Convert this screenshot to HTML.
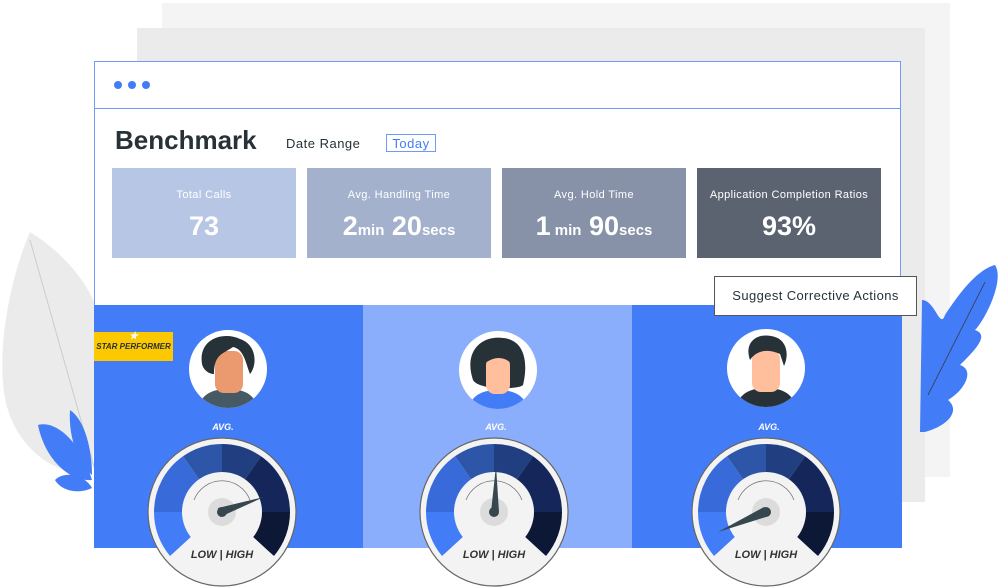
<!DOCTYPE html>
<html><head><meta charset="utf-8"><style>
body{margin:0;width:1000px;height:588px;position:relative;overflow:hidden;background:#fff;font-family:"Liberation Sans",sans-serif}
.a{position:absolute}
.card{position:absolute;top:168px;width:184px;height:90px;color:#fff;text-align:center}
.card .t{font-size:11px;margin-top:21px;letter-spacing:.4px}
.card .v{font-size:27px;font-weight:bold;margin-top:10px}
.card .v small{font-size:15px}
.lbl{position:absolute;font-size:9px;font-weight:bold;font-style:italic;color:#fff;width:60px;text-align:center}
.lh{position:absolute;font-size:11px;font-weight:bold;font-style:italic;color:#333;width:80px;text-align:center;top:549px}
</style></head><body>
<div class="a" style="left:162px;top:3px;width:788px;height:474px;background:#f4f4f4"></div>
<div class="a" style="left:137px;top:28px;width:788px;height:474px;background:#ebebeb"></div>
<svg class="a" style="left:0;top:0" width="1000" height="588">
<path d="M30 232 C60 250 100 290 100 330 C100 380 95 430 92 470 C60 480 20 450 8 410 C-5 370 5 290 30 232Z" fill="#ebebeb"/>
<path d="M30 240 L95 470" stroke="#ccc" fill="none"/>
<path d="M38 425 C55 420 80 440 92 480 C70 482 45 460 38 425Z" fill="#437cf7"/>
<path d="M55 480 C65 470 85 475 92 488 C80 494 62 492 55 480Z" fill="#437cf7"/>
<path d="M70 410 C85 420 92 450 92 475 C80 465 68 440 70 410Z" fill="#437cf7"/>
<path d="M995 265 C1005 280 985 320 975 330 C990 335 975 350 960 365 C975 370 965 390 948 400 C960 410 950 425 925 432 L920 432 L922 300 C935 300 940 330 945 315 C955 300 975 270 995 265Z" fill="#437cf7"/>
<path d="M985 282 L928 395" stroke="#333" stroke-width=".7"/>
</svg>
<div class="a" style="left:94px;top:61px;width:807px;height:244px;background:#fff;border:1px solid #6f9af5;border-bottom:none;box-sizing:border-box"></div>
<div class="a" style="left:95px;top:108px;width:806px;height:1px;background:#6f9af5"></div>
<div class="a" style="left:114px;top:81px;width:8px;height:8px;border-radius:50%;background:#437cf7"></div>
<div class="a" style="left:128px;top:81px;width:8px;height:8px;border-radius:50%;background:#437cf7"></div>
<div class="a" style="left:142px;top:81px;width:8px;height:8px;border-radius:50%;background:#437cf7"></div>
<div class="a" style="left:115px;top:125px;font-size:26px;font-weight:bold;color:#263238">Benchmark</div>
<div class="a" style="left:286px;top:136px;font-size:13px;color:#263238;letter-spacing:.5px">Date Range</div>
<div class="a" style="left:386px;top:134px;width:50px;height:18px;border:1px solid #6f9af5;box-sizing:border-box;font-size:13px;color:#437cf7;text-align:center;line-height:17px;letter-spacing:.5px">Today</div>
<div class="card" style="left:112px;background:#b8c6e5"><div class="t">Total Calls</div><div class="v">73</div></div>
<div class="card" style="left:307px;background:#a3b1cc"><div class="t">Avg. Handling Time</div><div class="v">2<small>min</small> 20<small>secs</small></div></div>
<div class="card" style="left:502px;background:#8792a8"><div class="t">Avg. Hold Time</div><div class="v">1<small> min</small> 90<small>secs</small></div></div>
<div class="card" style="left:697px;background:#5c6370"><div class="t">Application Completion Ratios</div><div class="v">93%</div></div>
<div class="a" style="left:94px;top:305px;width:269px;height:243px;background:#437cf7"></div>
<div class="a" style="left:363px;top:305px;width:269px;height:243px;background:#8aaefb"></div>
<div class="a" style="left:632px;top:305px;width:270px;height:243px;background:#437cf7"></div>
<div class="a" style="left:714px;top:276px;width:203px;height:40px;background:#fff;border:1px solid #555;box-sizing:border-box;font-size:13px;color:#263238;line-height:38px;text-align:center;letter-spacing:.4px">Suggest Corrective Actions</div>
<div class="a" style="left:94px;top:332px;width:79px;height:29px;background:#fcc800;text-align:center;font-size:8px;font-weight:bold;font-style:italic;color:#263238;line-height:10px"><span style="color:#fff;font-size:10px">★</span><br>STAR PERFORMER</div>
<svg class="a" style="left:0;top:0" width="1000" height="588">
<defs>
<clipPath id="cc"><circle r="39"/></clipPath>
<clipPath id="oc"><circle r="72"/></clipPath>
<g id="gauge">
<circle r="74" fill="#f3f3f3" stroke="#666" stroke-width="1.2"/>
<path d="M0 0L-52 44A68 68 0 0 1 -68 0Z" fill="#437cf7"/>
<path d="M0 0L-68 0A68 68 0 0 1 -39 -55.7Z" fill="#386bd9"/>
<path d="M0 0L-39 -55.7A68 68 0 0 1 0 -68Z" fill="#2d55a8"/>
<path d="M0 0L0 -68A68 68 0 0 1 39 -55.7Z" fill="#213f80"/>
<path d="M0 0L39 -55.7A68 68 0 0 1 68 0Z" fill="#14265a"/>
<path d="M0 0L68 0A68 68 0 0 1 52 44Z" fill="#0c1836"/>
<circle r="40" fill="#f3f3f3"/>
<path d="M-54 46L-28 22L28 22L54 46L0 90Z" fill="#f3f3f3" clip-path="url(#oc)"/>
<path d="M-28 -12A30 30 0 0 1 28 -12" fill="none" stroke="#777" stroke-width=".8"/>
<circle r="14" fill="#dcdcdc"/>
</g>
<g id="av1">
<circle r="39" fill="#fff"/>
<g clip-path="url(#cc)">
<path d="M-30 45C-30 25 -15 20 0 20C15 20 30 25 30 45Z" fill="#455a64"/>
<rect x="-13" y="-18" width="28" height="42" rx="9" fill="#eb996e"/>
<path d="M-26 -5C-30 -30 -5 -38 12 -30C28 -25 30 -5 22 5C18 -5 16 -20 5 -22C-5 -15 -14 -15 -14 5C-20 5 -25 0 -26 -5Z" fill="#263238"/>
</g>
</g>
<g id="av3">
<circle r="39" fill="#fff"/>
<g clip-path="url(#cc)">
<path d="M-30 45C-30 25 -15 20 0 20C15 20 30 25 30 45Z" fill="#263238"/>
<rect x="-14" y="-18" width="28" height="42" rx="9" fill="#ffbf9d"/>
<path d="M-16 -8C-22 -25 -10 -35 5 -32C20 -30 24 -15 18 -2L14 -14C5 -18 -8 -20 -16 -8Z" fill="#263238"/>
</g>
</g>
</defs>
<use href="#av1" x="228" y="369"/>
<g transform="translate(498 370)">
<circle r="39" fill="#fff"/>
<g clip-path="url(#cc)">
<path d="M-30 45C-30 25 -15 20 0 20C15 20 30 25 30 45Z" fill="#437cf7"/>
<path d="M-25 10C-35 -20 -15 -35 5 -32C28 -30 30 -5 25 15C20 20 -20 20 -25 10Z" fill="#263238"/>
<rect x="-12" y="-14" width="24" height="38" rx="9" fill="#ffbf9d"/>
<path d="M-14 -6C-8 -24 10 -24 14 -6C6 -14 -4 -14 -14 -6Z" fill="#263238"/>
</g>
</g>
<use href="#av3" x="766" y="368"/>
<use href="#gauge" x="222" y="512"/>
<use href="#gauge" x="494" y="512"/>
<use href="#gauge" x="766" y="512"/>
<path d="M218 508L264 497L220 517Z" fill="#37474f"/><circle cx="222" cy="512" r="5" fill="#37474f"/>
<path d="M491 512L496 466L499 512Z" fill="#37474f"/><circle cx="494" cy="512" r="5" fill="#37474f"/>
<path d="M764 507L718 532L769 516Z" fill="#37474f"/><circle cx="766" cy="512" r="5" fill="#37474f"/>
</svg>
<div class="lbl" style="left:193px;top:422px">AVG.</div>
<div class="lbl" style="left:466px;top:422px">AVG.</div>
<div class="lbl" style="left:739px;top:422px">AVG.</div>
<div class="lh" style="left:182px">LOW | HIGH</div>
<div class="lh" style="left:454px">LOW | HIGH</div>
<div class="lh" style="left:726px">LOW | HIGH</div>
</body></html>
